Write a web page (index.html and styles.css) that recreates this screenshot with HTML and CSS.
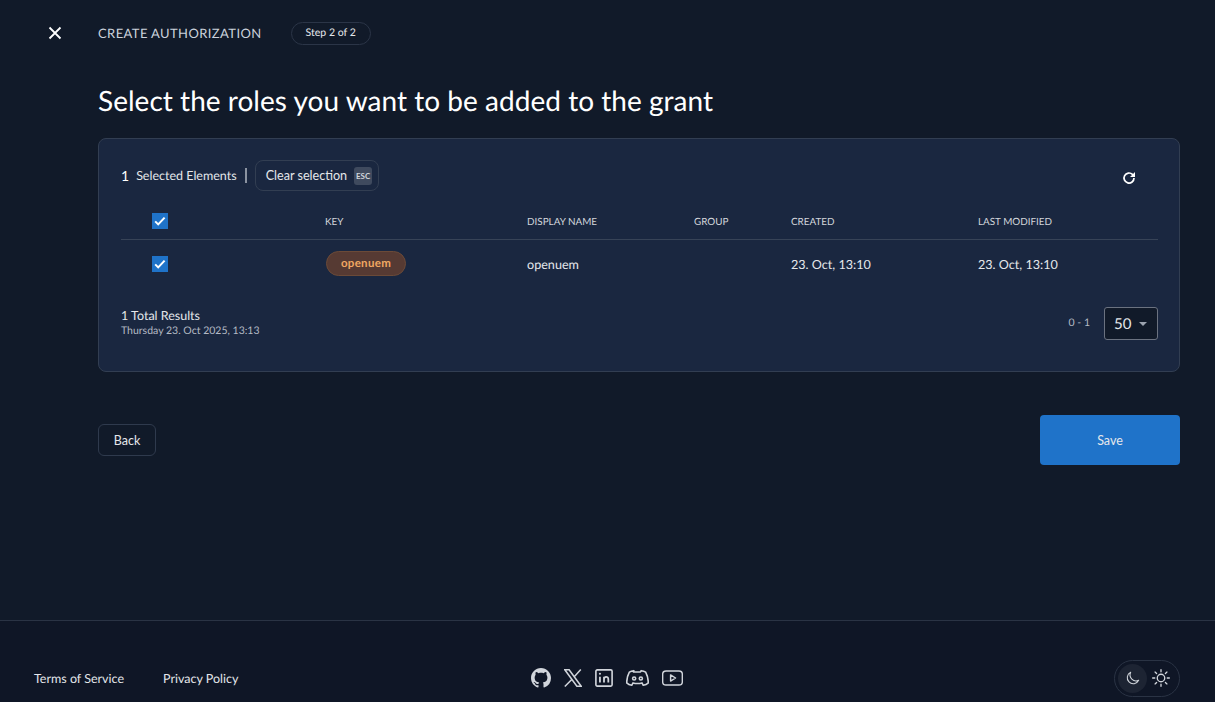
FILE: index.html
```html
<!DOCTYPE html>
<html lang="en">
<head>
    <meta charset="UTF-8">
    <meta name="viewport" content="width=device-width, initial-scale=1.0">
    <title>Create Authorization</title>
    <link rel="stylesheet" href="styles.css">
</head>
<body>
<div class="page">
    <header class="topbar">
        <button class="close-btn" aria-label="Close">
            <svg width="24" height="24" viewBox="0 0 24 24" fill="none" stroke="#fff" stroke-width="1.8"><path d="M6.5 6.5l11 11M17.5 6.5l-11 11"/></svg>
        </button>
        <span class="topbar-title">CREATE AUTHORIZATION</span>
        <span class="step-pill">Step 2 of 2</span>
    </header>

    <main class="content">
        <h1>Select the roles you want to be added to the grant</h1>

        <section class="card">
            <div class="selection-bar">
                <span class="sel-count">1</span>
                <span class="sel-label">Selected Elements</span>
                <span class="sel-divider"></span>
                <button class="clear-btn">Clear selection <span class="kbd">ESC</span></button>
                <button class="refresh-btn" aria-label="Refresh">
                    <svg width="16" height="16" viewBox="0 0 24 24" fill="none" stroke="#fff" stroke-width="2.6"><path d="M19.5 12a7.500 7.500 0 1 1-2.300-5.400L20 9"/><path d="M21 3v7.500h-7.500z" fill="#fff" stroke="none"/></svg>
                </button>
            </div>

            <div class="row row-head">
                <span class="check-cell"><span class="checkbox"><svg width="16" height="16" viewBox="0 0 16 16" fill="none" stroke="#fff" stroke-width="2"><path d="M3.2 8.400l3 3 6.400-6.800"/></svg></span></span>
                <span class="head-label">KEY</span>
                <span class="head-label">DISPLAY NAME</span>
                <span class="head-label">GROUP</span>
                <span class="head-label">CREATED</span>
                <span class="head-label">LAST MODIFIED</span>
            </div>
            <div class="row row-body">
                <span class="check-cell"><span class="checkbox"><svg width="16" height="16" viewBox="0 0 16 16" fill="none" stroke="#fff" stroke-width="2"><path d="M3.2 8.400l3 3 6.400-6.800"/></svg></span></span>
                <span><span class="role-badge">openuem</span></span>
                <span class="cell-text">openuem</span>
                <span></span>
                <span class="cell-text">23. Oct, 13:10</span>
                <span class="cell-text">23. Oct, 13:10</span>
            </div>

            <div class="table-foot">
                <div class="results">
                    <div class="results-total">1 Total Results</div>
                    <div class="results-date">Thursday 23. Oct 2025, 13:13</div>
                </div>
                <div class="paging">
                    <span class="range">0 - 1</span>
                    <div class="page-size">50 <span class="caret"></span></div>
                </div>
            </div>
        </section>

        <div class="actions">
            <button class="back-btn">Back</button>
            <button class="save-btn">Save</button>
        </div>
    </main>

    <footer class="footer">
        <nav class="footer-links">
            <a href="#">Terms of Service</a>
            <a href="#">Privacy Policy</a>
        </nav>
        <div class="socials">
            <svg width="20" height="20" viewBox="0 0 16 16" fill="#d1d5db"><path d="M8 0C3.58 0 0 3.58 0 8c0 3.54 2.29 6.53 5.47 7.590.4.07.55-.17.55-.38 0-.19-.01-.82-.01-1.490-2.010.37-2.530-.49-2.690-.94-.09-.23-.48-.94-.82-1.130-.28-.15-.68-.52-.01-.53.63-.01 1.080.58 1.230.82.72 1.210 1.870.87 2.330.66.07-.52.28-.87.51-1.070-1.780-.2-3.640-.89-3.640-3.950 0-.87.31-1.590.82-2.150-.08-.2-.36-1.020.08-2.120 0 0 .67-.21 2.200.82.64-.18 1.320-.27 2-.27s1.360.09 2 .27c1.530-1.040 2.200-.82 2.200-.82.44 1.100.16 1.920.08 2.120.51.56.82 1.270.82 2.150 0 3.070-1.870 3.750-3.650 3.950.29.25.54.73.54 1.480 0 1.070-.01 1.930-.01 2.200 0 .21.15.46.55.38A8.010 8.010 0 0 0 16 8c0-4.420-3.580-8-8-8z"/></svg>
            <svg width="18" height="18" viewBox="3 3 18 18" fill="none" stroke="#d1d5db" stroke-width="1.500"><path d="M3.800 3.700h4.300l12.100 16.600h-4.300zM19.800 3.500l-7 7.700M11 13.200l-7.200 7.300"/></svg>
            <svg width="18" height="18" viewBox="2 2 20 20" fill="none" stroke="#d1d5db" stroke-width="1.800"><rect x="3" y="3" width="18" height="18" rx="1.500"/><path d="M7.500 10.500V17M12 17v-6.500M12 13.500c0-3.600 4.800-3.800 4.800 0V17" stroke-width="2"/><circle cx="7.500" cy="7.300" r="1.200" fill="#d1d5db" stroke="none"/></svg>
            <svg width="23" height="19" viewBox="1 4 22 18" fill="none" stroke="#d1d5db" stroke-width="1.500" stroke-linejoin="round"><path d="M8.500 5.500c-1.800.2-3.300.8-4.300 1.500C2.600 10 1.600 13.500 1.700 17.200c1.300 1.300 3 2 4.800 2.300l1.200-2.300c2.900.9 5.700.9 8.600 0l1.200 2.300c1.800-.3 3.500-1 4.800-2.300.1-3.700-.9-7.200-2.500-10.200-1-.7-2.500-1.300-4.300-1.500l-.6 1.300h-6.800z"/><circle cx="8.800" cy="13" r="1.500"/><circle cx="15.200" cy="13" r="1.500"/></svg>
            <svg width="21" height="16" viewBox="1 4 22 16" fill="none" stroke="#d1d5db" stroke-width="1.500" stroke-linejoin="round"><rect x="1.700" y="4.700" width="20.600" height="14.600" rx="3.500"/><path d="M10 8.800v6.400l5.200-3.200z"/></svg>
        </div>
        <div class="theme-wrap">
            <div class="theme-toggle">
                <span class="theme-opt theme-active">
                    <svg width="16" height="16" viewBox="0 0 24 24" fill="none" stroke="#d1d5db" stroke-width="1.600" stroke-linejoin="round"><path d="M20.500 15.500A9 9 0 0 1 8.500 3.500a9 9 0 1 0 12 12z"/></svg>
                </span>
                <span class="theme-opt theme-sun">
                    <svg width="20" height="20" viewBox="0 0 24 24" fill="none" stroke="#d1d5db" stroke-width="1.600" stroke-linecap="round"><circle cx="12" cy="12" r="4.500"/><path d="M12 2v2.500M12 19.500V22M2 12h2.500M19.500 12H22M4.900 4.900l1.800 1.800M17.300 17.300l1.800 1.800M4.900 19.100l1.800-1.800M17.300 6.700l1.800-1.800"/></svg>
                </span>
            </div>
        </div>
    </footer>
</div>
</body>
</html>
```

FILE: styles.css
```css
* {
    box-sizing: border-box;
}
body {
    margin: 0;
    background: #111a29;
    color: #fff;
    font-family: Lato, "Open Sans", sans-serif;
    font-size: 14px;
    text-rendering: geometricPrecision;
}
button {
    font-family: inherit;
    color: inherit;
    background: none;
    cursor: pointer;
}
.page {
    height: 702px;
    overflow: hidden;
    display: flex;
    flex-direction: column;
}

/* Top bar */
.topbar {
    display: flex;
    align-items: center;
    height: 24px;
    margin-top: 21px;
    padding-left: 43px;
}
.close-btn {
    width: 24px;
    height: 24px;
    padding: 0;
    border: none;
    margin-right: 31px;
}
.topbar-title {
    font-size: 13px;
    letter-spacing: 0.4px;
    color: #cbd2dc;
    margin-right: 29px;
}
.step-pill {
    display: flex;
    align-items: center;
    height: 23px;
    padding: 0 14px;
    border: 1px solid #2b3547;
    border-radius: 12px;
    font-size: 10.5px;
    color: #e5e7eb;
}

/* Main content */
.content {
    flex: 1;
    padding: 0 35px 0 98px;
}
h1 {
    margin: 36px 0 19px;
    font-size: 28px;
    font-weight: 400;
    line-height: 38px;
    letter-spacing: 0.03px;
}
.card {
    height: 234px;
    padding: 21px 21px 0 22px;
    background: #1a2740;
    border: 1px solid #323e52;
    border-radius: 8px;
}
.selection-bar {
    display: flex;
    align-items: center;
    height: 31px;
}
.sel-count {
    font-size: 14px;
    margin-right: 7px;
}
.sel-label {
    font-size: 12.5px;
    color: #e5e7eb;
}
.sel-divider {
    width: 2px;
    height: 15px;
    background: #8b93a1;
    margin: 0 8px;
}
.clear-btn {
    display: flex;
    align-items: center;
    height: 31px;
    padding: 0 6px 0 10px;
    border: 1px solid #323e52;
    border-radius: 8px;
    font-size: 12.6px;
    color: #e5e7eb;
}
.kbd {
    display: flex;
    align-items: center;
    justify-content: center;
    width: 18px;
    height: 18px;
    margin-left: 7px;
    background: #3f4a5e;
    border-radius: 3px;
    font-size: 8px;
    font-weight: 700;
    color: #d1d5db;
}
.refresh-btn {
    margin-left: auto;
    margin-right: 21px;
    margin-top: 4px;
    width: 16px;
    height: 16px;
    padding: 0;
    border: none;
    display: flex;
}

/* Table */
.row {
    display: grid;
    grid-template-columns: 204px 202px 167px 97px 187px 180px;
    align-items: center;
}
.row-head {
    height: 49px;
    padding-top: 12px;
    border-bottom: 1px solid #374357;
    font-size: 9.9px;
    color: #d1d5db;
}
.head-label {
    padding-top: 2px;
}
.row-body {
    height: 47px;
    font-size: 12.6px;
    color: #e5e7eb;
}
.cell-text {
    padding-top: 2px;
}
.check-cell {
    padding-left: 31px;
    display: flex;
}
.checkbox {
    display: flex;
    width: 16px;
    height: 16px;
    background: #1f73c9;
}
.role-badge {
    display: inline-flex;
    align-items: center;
    justify-content: center;
    width: 80px;
    height: 25px;
    margin-left: 1px;
    background: #563a33;
    border: 1px solid #6b4a38;
    border-radius: 13px;
    font-size: 11.5px;
    font-weight: 700;
    letter-spacing: 0.3px;
    color: #f0a762;
}
.table-foot {
    display: flex;
    justify-content: space-between;
    padding-top: 20px;
}
.results {
    padding-top: 1px;
}
.results-total {
    font-size: 12.5px;
    line-height: 16px;
    color: #e5e7eb;
}
.results-date {
    font-size: 10.5px;
    line-height: 15px;
    color: #b4bac4;
}
.paging {
    display: flex;
    align-items: center;
}
.range {
    font-size: 10.5px;
    color: #b4bac4;
    margin-right: 14px;
    padding-bottom: 2px;
}
.page-size {
    display: flex;
    align-items: center;
    width: 54px;
    height: 33px;
    padding-left: 9px;
    background: #111a29;
    border: 1px solid #6b7280;
    border-radius: 3px;
    font-size: 15px;
    color: #e5e7eb;
}
.caret {
    margin-left: 8px;
    border-left: 4px solid transparent;
    border-right: 4px solid transparent;
    border-top: 4px solid #9ca3af;
}

/* Back / Save */
.actions {
    display: flex;
    justify-content: space-between;
    align-items: center;
    margin-top: 43px;
}
.back-btn {
    width: 58px;
    height: 32px;
    padding: 0;
    border: 1px solid #2f3a4d;
    border-radius: 6px;
    font-size: 12.5px;
    color: #e5e7eb;
}
.save-btn {
    width: 140px;
    height: 50px;
    padding: 0;
    border: none;
    border-radius: 4px;
    background: #1f73c9;
    font-size: 12.5px;
    color: #e5e7eb;
}

/* Footer */
.footer {
    height: 82px;
    display: grid;
    grid-template-columns: 1fr auto 1fr;
    align-items: center;
    padding: 33px 35px 0 34px;
    background: #0f1626;
    border-top: 1px solid #2a3344;
}
.footer-links {
    display: flex;
    gap: 39px;
}
.footer-links a {
    font-size: 12.5px;
    color: #e5e7eb;
    text-decoration: none;
}
.socials {
    display: flex;
    align-items: center;
    gap: 13px;
}
.theme-wrap {
    display: flex;
    justify-content: flex-end;
}
.theme-toggle {
    display: flex;
    align-items: center;
    height: 37px;
    padding: 0 5px 0 3px;
    border: 1px solid #2a3344;
    border-radius: 19px;
}
.theme-opt {
    display: flex;
    align-items: center;
    justify-content: center;
    width: 29px;
    height: 29px;
    border-radius: 50%;
}
.theme-sun {
    width: 27px;
}
.theme-active {
    background: #1d2433;
}
```
